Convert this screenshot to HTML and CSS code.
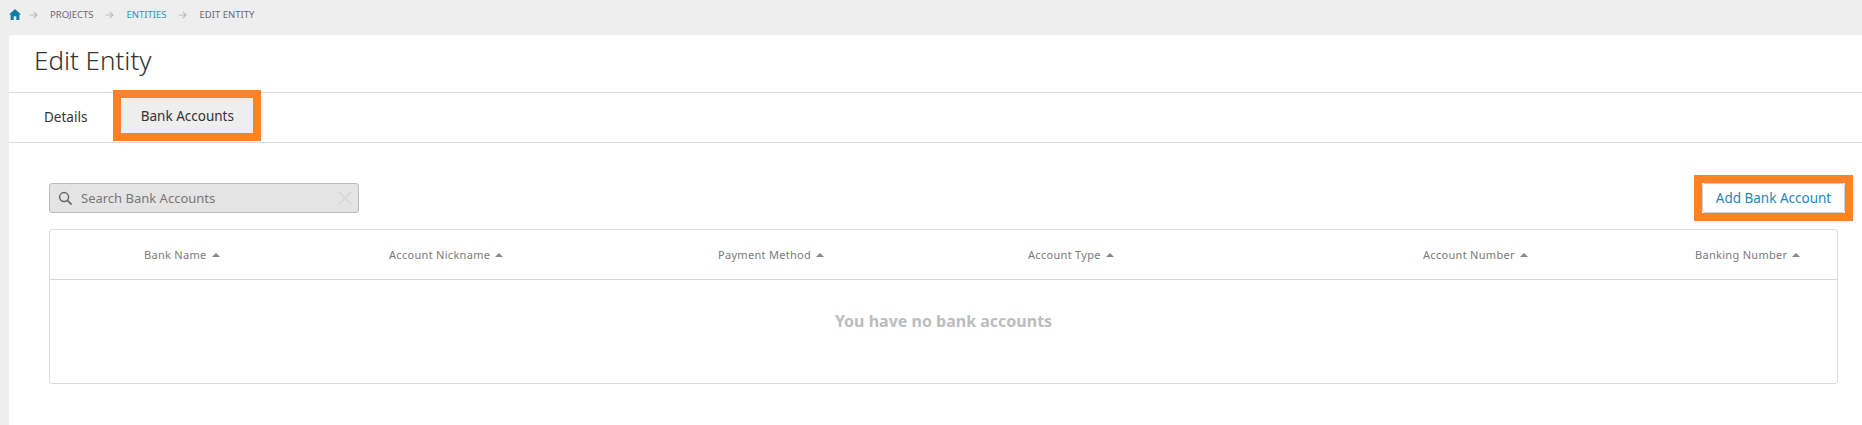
FILE: index.html
```html
<!DOCTYPE html>
<html lang="en">
<head>
<meta charset="utf-8">
<title>Edit Entity</title>
<link rel="stylesheet" href="styles.css">
</head>
<body>
<nav class="crumbs">
  <svg class="home" viewBox="0 0 12 11" width="12" height="11"><path d="M6 0 L12 5.6 H10.4 V11 H7.3 V7.2 H4.7 V11 H1.6 V5.6 H0 Z" fill="#0f7fa8"/></svg>
  <svg class="arrow" viewBox="0 0 9 8" width="9" height="8"><path d="M0.5 4 H8 M4.8 0.8 L8 4 L4.8 7.2" fill="none" stroke="#bdbdbd" stroke-width="1.2"/></svg>
  <span class="crumb">PROJECTS</span>
  <svg class="arrow" viewBox="0 0 9 8" width="9" height="8"><path d="M0.5 4 H8 M4.8 0.8 L8 4 L4.8 7.2" fill="none" stroke="#bdbdbd" stroke-width="1.2"/></svg>
  <span class="crumb link">ENTITIES</span>
  <svg class="arrow" viewBox="0 0 9 8" width="9" height="8"><path d="M0.5 4 H8 M4.8 0.8 L8 4 L4.8 7.2" fill="none" stroke="#bdbdbd" stroke-width="1.2"/></svg>
  <span class="crumb">EDIT ENTITY</span>
</nav>
<main class="card">
  <h1 class="title">Edit Entity</h1>
  <div class="tabs">
    <span class="tab">Details</span>
    <div class="mark mark-tab"><span class="tab active">Bank Accounts</span></div>
  </div>
  <section class="content">
    <div class="toolbar">
      <div class="search">
        <svg viewBox="0 0 16 16" width="15" height="15"><circle cx="6.5" cy="6.5" r="4.8" fill="none" stroke="#666" stroke-width="1.6"/><path d="M10 10 L14.5 14.5" stroke="#666" stroke-width="1.8"/></svg>
        <span class="placeholder">Search Bank Accounts</span>
        <svg class="clear" viewBox="0 0 14 14" width="14" height="14"><path d="M1 1 L13 13 M13 1 L1 13" stroke="#d6d6d6" stroke-width="1.4"/></svg>
      </div>
      <div class="mark mark-btn"><button class="add" type="button">Add Bank Account</button></div>
    </div>
    <div class="table">
      <div class="thead">
        <div class="th">Bank Name <i class="sort"></i></div>
        <div class="th">Account Nickname <i class="sort"></i></div>
        <div class="th">Payment Method <i class="sort"></i></div>
        <div class="th">Account Type <i class="sort"></i></div>
        <div class="th">Account Number <i class="sort"></i></div>
        <div class="th">Banking Number <i class="sort"></i></div>
      </div>
      <div class="empty">You have no bank accounts</div>
    </div>
  </section>
</main>
</body>
</html>
```
FILE: styles.css
```css
* { box-sizing: border-box; }
html, body { height: 100%; }
body {
  margin: 0;
  background: #eeeeee;
  font-family: "Noto Sans", "Open Sans", sans-serif;
  overflow: hidden;
}
.crumbs {
  height: 35px;
  padding: 0 0 6px 9px;
  display: flex;
  align-items: center;
  gap: 8px;
  font-size: 9.5px;
}
.crumbs .arrow:first-of-type { margin-left: 3px; }
.crumb { color: #666a70; margin: 0 4px; }
.crumb.link { color: #2b95bd; }
.card {
  margin-left: 9px;
  background: #fff;
  border-top-left-radius: 3px;
  height: 390px;
}
.title {
  margin: 0;
  height: 58px;
  padding: 9px 0 0 25px;
  font-size: 26px;
  line-height: 32px;
  font-weight: 300;
  color: #333;
  border-bottom: 1px solid #dcdcdc;
}
.tabs {
  height: 50px;
  display: flex;
  align-items: flex-start;
  padding-left: 18px;
  border-bottom: 1px solid #dcdcdc;
  font-size: 13.5px;
  color: #333;
}
.tab {
  display: flex;
  align-items: center;
  height: 35px;
  padding: 0 17px;
  margin-top: 6px;
}
.tab.active {
  margin: 0;
  width: 132px;
  padding: 0;
  justify-content: center;
  background: #eeeeee;
}
.mark { border: 8px solid #ff8128; }
.mark-tab { margin: -3px 0 0 9px; }
.mark-btn { margin: -10px -15px -10px 0; }
.content { padding: 40px 24px 0 40px; }
.toolbar {
  display: flex;
  justify-content: space-between;
  align-items: center;
  height: 30px;
  margin-bottom: 16px;
}
.search {
  width: 310px;
  height: 30px;
  display: flex;
  align-items: center;
  gap: 8px;
  padding: 0 6px 0 8px;
  background: #e4e4e4;
  border: 1px solid #bcbcbc;
  border-radius: 3px;
  font-size: 13px;
}
.placeholder { flex: 1; color: #777; }
.add {
  display: block;
  width: 143px;
  height: 30px;
  padding: 0;
  font: inherit;
  font-size: 13.5px;
  color: #1d88b8;
  background: #fff;
  border: 1px solid #cfcfcf;
  border-radius: 3px;
}
.table {
  height: 155px;
  border: 1px solid #dcdcdc;
  border-radius: 3px;
}
.thead {
  height: 50px;
  display: grid;
  grid-template-columns: 245px 329px 310px 395px 272px 1fr;
  align-items: center;
  padding-left: 94px;
  border-bottom: 1px solid #d3d8dc;
}
.th {
  display: flex;
  align-items: center;
  gap: 5px;
  font-size: 11px;
  letter-spacing: .3px;
  color: #7a7a7a;
  white-space: nowrap;
}
.sort {
  width: 0;
  height: 0;
  border-left: 4px solid transparent;
  border-right: 4px solid transparent;
  border-bottom: 4px solid #7f8a94;
}
.empty {
  padding-top: 30px;
  text-align: center;
  font-size: 16px;
  font-weight: 700;
  color: #bdbdbd;
}
```
